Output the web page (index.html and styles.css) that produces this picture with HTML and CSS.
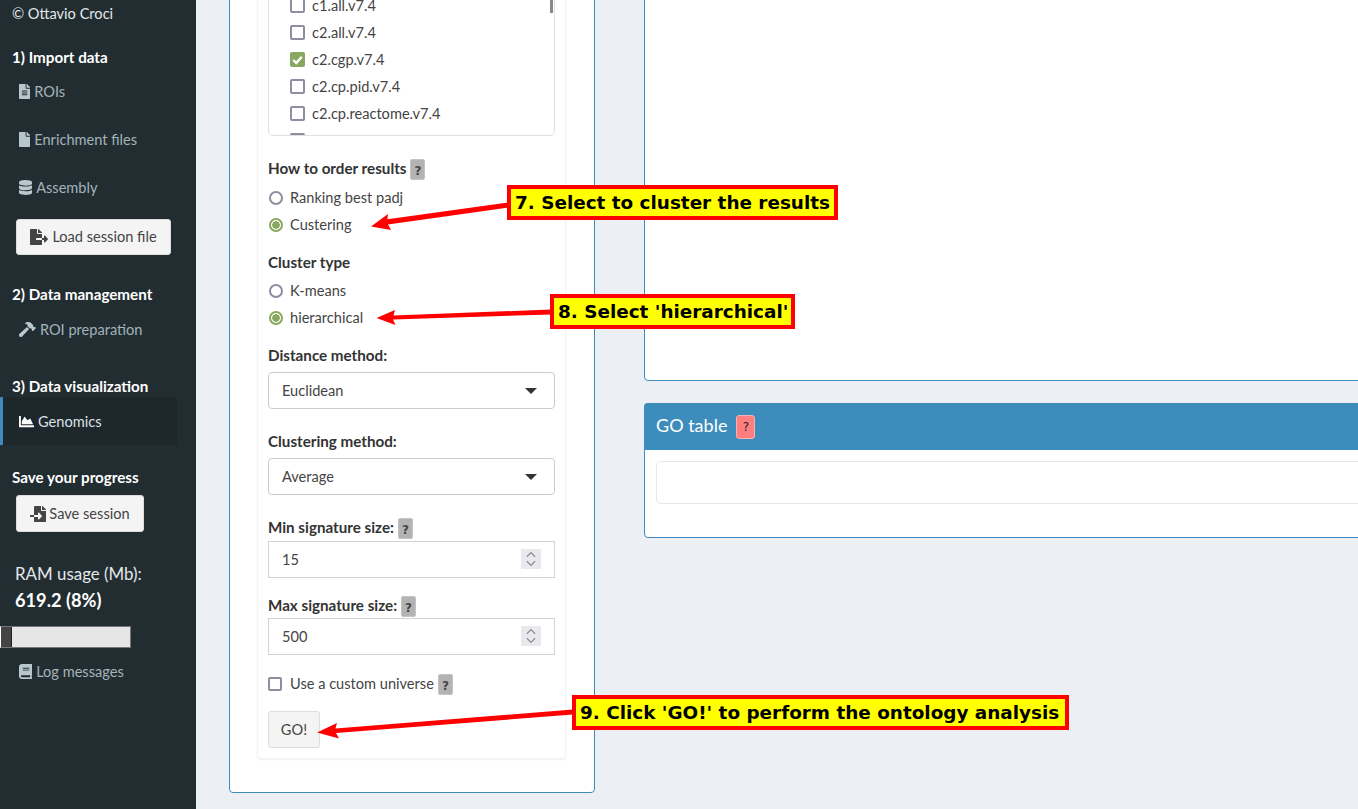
FILE: index.html
```html
<!DOCTYPE html>
<html lang="en">
<head>
<meta charset="UTF-8" />
<title>Ontology analysis</title>
<link rel="stylesheet" href="styles.css">
</head>
<body>
  <aside class="sidebar">
    <div class="side-copy">© Ottavio Croci</div>
    <div class="side-head first">1) Import data</div>
    <a class="nav-item tight"><svg class="ico" viewBox="0 0 384 512"><path d="M224 136V0H24C10.7 0 0 10.7 0 24v464c0 13.3 10.7 24 24 24h336c13.3 0 24-10.7 24-24V160H248c-13.2 0-24-10.8-24-24zm64 236c0 6.600-5.400 12-12 12H108c-6.600 0-12-5.400-12-12v-8c0-6.600 5.400-12 12-12h168c6.600 0 12 5.400 12 12v8zm0-64c0 6.600-5.400 12-12 12H108c-6.600 0-12-5.400-12-12v-8c0-6.600 5.400-12 12-12h168c6.600 0 12 5.400 12 12v8zm0-72v8c0 6.600-5.400 12-12 12H108c-6.600 0-12-5.400-12-12v-8c0-6.600 5.400-12 12-12h168c6.600 0 12 5.400 12 12zm96-114.100v6.100H256V0h6.100c6.400 0 12.500 2.500 17 7l97.900 98c4.500 4.500 7 10.600 7 16.900z"/></svg>ROIs</a>
    <a class="nav-item"><svg class="ico" viewBox="0 0 384 512"><path d="M224 136V0H24C10.7 0 0 10.7 0 24v464c0 13.3 10.7 24 24 24h336c13.3 0 24-10.7 24-24V160H248c-13.2 0-24-10.8-24-24zm160-14.100v6.100H256V0h6.100c6.400 0 12.500 2.500 17 7l97.900 98c4.500 4.500 7 10.600 7 16.900z"/></svg>Enrichment files</a>
    <a class="nav-item"><svg class="ico" viewBox="0 0 448 512"><path d="M448 73.143v45.714C448 159.143 347.667 192 224 192S0 159.143 0 118.857V73.143C0 32.857 100.333 0 224 0s224 32.857 224 73.143zM448 176v102.857C448 319.143 347.667 352 224 352S0 319.143 0 278.857V176c48.125 33.143 136.208 48.572 224 48.572S399.874 209.143 448 176zm0 160v102.857C448 479.143 347.667 512 224 512S0 479.143 0 438.857V336c48.125 33.143 136.208 48.572 224 48.572S399.874 369.143 448 336z"/></svg>Assembly</a>
    <button class="btn load-btn"><svg class="ico" viewBox="0 0 576 512"><path d="M384 121.900c0-6.300-2.500-12.400-7-16.900L279.100 7c-4.500-4.500-10.600-7-17-7H256v128h128zM571 308l-95.700-96.400c-10.100-10.100-27.400-3-27.400 11.300V288h-64v64h64v65.200c0 14.300 17.300 21.400 27.400 11.300L571 332c6.600-6.600 6.600-17.400 0-24zm-379 28v-32c0-8.800 7.200-16 16-16h176V160H248c-13.200 0-24-10.800-24-24V0H24C10.700 0 0 10.700 0 24v464c0 13.300 10.700 24 24 24h336c13.300 0 24-10.700 24-24V352H208c-8.800 0-16-7.200-16-16z"/></svg>Load session file</button>

    <div class="side-head second">2) Data management</div>
    <a class="nav-item"><svg class="ico" viewBox="0 0 576 512"><path d="M571.310 193.940l-22.630-22.630c-6.250-6.250-16.380-6.250-22.630 0l-11.310 11.310-28.900-28.900c5.630-21.310.36-44.900-16.350-61.610l-45.250-45.250c-62.480-62.480-163.790-62.480-226.280 0l90.510 45.250v18.750c0 16.970 6.740 33.250 18.750 45.250l49.140 49.140c16.710 16.710 40.300 21.980 61.610 16.350l28.900 28.900-11.310 11.310c-6.250 6.250-6.250 16.380 0 22.630l22.630 22.630c6.250 6.250 16.380 6.250 22.630 0l90.510-90.510c6.230-6.240 6.230-16.370-.02-22.620zm-286.720-15.200c-3.700-3.700-6.840-7.790-9.850-11.950L19.640 404.960c-25.570 23.880-26.260 64.190-1.530 88.930s65.050 24.050 88.930-1.530l238.130-255.070c-3.960-2.910-7.900-5.870-11.440-9.410l-49.140-49.140z"/></svg>ROI preparation</a>

    <div class="side-head third">3) Data visualization</div>
    <a class="nav-item active"><svg class="ico" viewBox="0 0 512 512"><path d="M500 384c6.600 0 12 5.400 12 12v40c0 6.600-5.400 12-12 12H12c-6.600 0-12-5.400-12-12V76c0-6.600 5.400-12 12-12h40c6.600 0 12 5.400 12 12v308h436zM372.700 159.500L288 216l-85.300-113.700c-5.100-6.800-15.500-6.300-19.900 1L96 248v104h384l-89.900-187.800c-3.200-6.500-11.400-8.700-17.400-4.700z"/></svg>Genomics</a>

    <div class="side-head fourth">Save your progress</div>
    <button class="btn save-btn"><svg class="ico" viewBox="0 0 512 512"><path d="M16 288c-8.800 0-16 7.200-16 16v32c0 8.800 7.200 16 16 16h112v-64zm489-183L407.100 7c-4.500-4.500-10.600-7-17-7H384v128h128v-6.100c0-6.300-2.500-12.400-7-16.900zm-153 31V0H152c-13.300 0-24 10.700-24 24v264h128v-65.200c0-14.300 17.300-21.400 27.400-11.300L379 308c6.600 6.700 6.600 17.400 0 24l-95.700 96.400c-10.100 10.100-27.400 3-27.400-11.300V352H128v136c0 13.300 10.700 24 24 24h336c13.300 0 24-10.700 24-24V160H376c-13.200 0-24-10.800-24-24z"/></svg>Save session</button>

    <div class="ram-label">RAM usage (Mb):</div>
    <div class="ram-value">619.2 (8%)</div>
    <div class="ram-bar"><div class="ram-fill"></div></div>
    <a class="nav-item log-item"><svg class="ico" viewBox="0 0 448 512"><path d="M448 360V24c0-13.300-10.700-24-24-24H96C43 0 0 43 0 96v320c0 53 43 96 96 96h328c13.300 0 24-10.700 24-24v-16c0-7.500-3.500-14.300-8.900-18.700-4.200-15.400-4.200-59.300 0-74.700 5.400-4.300 8.900-11.100 8.900-18.600zM128 134c0-3.300 2.700-6 6-6h212c3.300 0 6 2.700 6 6v20c0 3.300-2.700 6-6 6H134c-3.300 0-6-2.700-6-6v-20zm0 64c0-3.300 2.700-6 6-6h212c3.300 0 6 2.700 6 6v20c0 3.300-2.700 6-6 6H134c-3.300 0-6-2.700-6-6v-20zm253.400 250H96c-17.700 0-32-14.300-32-32 0-17.600 14.400-32 32-32h285.400c-1.900 17.100-1.900 46.900 0 64z"/></svg>Log messages</a>
  </aside>

  <main class="content">
    <section class="box form-box">
      <div class="well">
        <div class="check-list">
          <div class="thumb"></div>
          <div class="opt"><span class="cb"></span>c1.all.v7.4</div>
          <div class="opt"><span class="cb"></span>c2.all.v7.4</div>
          <div class="opt"><span class="cb on"><svg viewBox="0 0 14 14"><path d="M3 7.500l2.800 2.800L11 4.500" fill="none" stroke="#fff" stroke-width="2.200"/></svg></span>c2.cgp.v7.4</div>
          <div class="opt"><span class="cb"></span>c2.cp.pid.v7.4</div>
          <div class="opt"><span class="cb"></span>c2.cp.reactome.v7.4</div>
          <div class="opt"><span class="cb"></span></div>
        </div>

        <div class="lbl m23">How to order results <span class="help">?</span></div>
        <div class="radios">
          <div class="opt radio"><span class="rd"></span>Ranking best padj</div>
          <div class="opt radio"><span class="rd on"></span>Custering</div>
        </div>

        <div class="lbl m15">Cluster type</div>
        <div class="radios r4">
          <div class="opt radio"><span class="rd"></span>K-means</div>
          <div class="opt radio"><span class="rd on"></span>hierarchical</div>
        </div>

        <div class="lbl m15">Distance method:</div>
        <div class="select">Euclidean<span class="caret"></span></div>

        <div class="lbl m23">Clustering method:</div>
        <div class="select">Average<span class="caret"></span></div>

        <div class="lbl m23">Min signature size: <span class="help">?</span></div>
        <div class="num num-min">15<span class="spin"><svg viewBox="0 0 20 22"><path d="M5.500 8.500L10 4l4.500 4.500M5.500 13.500L10 18l4.500-4.500" fill="none" stroke="#8a8a92" stroke-width="1.300"/></svg></span></div>

        <div class="lbl m18">Max signature size: <span class="help">?</span></div>
        <div class="num num-max">500<span class="spin"><svg viewBox="0 0 20 22"><path d="M5.500 8.500L10 4l4.500 4.500M5.500 13.500L10 18l4.500-4.500" fill="none" stroke="#8a8a92" stroke-width="1.300"/></svg></span></div>

        <div class="opt universe"><span class="cb"></span>Use a custom universe <span class="help">?</span></div>
        <button class="btn go-btn">GO!</button>
      </div>
    </section>

    <div class="right-col">
      <section class="box plot-box"></section>
      <section class="box table-box">
        <header class="box-head">GO table <span class="help red">?</span></header>
        <div class="box-body"><div class="empty-table"></div></div>
      </section>
    </div>
  </main>

  <!-- tutorial annotations drawn over the app -->
  <svg class="arrows" viewBox="0 0 1358 809">
    <g fill="#f00">
      <path d="M508 202.500l.8 5L388 224.500l3 5.500-20-3.500 17-12.500-.6 5.300z"/>
      <path d="M551 309.500v5l-158 5 2.500 5.500-19-7 18.500-8 -1.500 5.500z"/>
      <path d="M573 709.500v5l-237 18.500 3 5.500-22-6 20-9.500-1.500 5.500z"/>
    </g>
  </svg>
  <div class="note note-7">7. Select to cluster the results</div>
  <div class="note note-8">8. Select 'hierarchical'</div>
  <div class="note note-9">9. Click 'GO!' to perform the ontology analysis</div>
</body>
</html>
```

FILE: styles.css
```css
* {
  box-sizing: border-box;
}
html, body {
  height: 100%;
}
body {
  margin: 0;
  display: flex;
  overflow: hidden;
  position: relative;
  background: #ecf0f5;
  font-family: "Lato", "Noto Sans", sans-serif;
  font-size: 14.6px;
  color: #444;
}

/* Sidebar */
.sidebar {
  width: 196px;
  flex: none;
  background: #222d32;
  color: #fff;
  padding-top: 3px;
}
.side-copy, .side-head {
  height: 20px;
  line-height: 19px;
  padding-left: 12px;
}
.side-copy {
  line-height: 21px;
  color: #e4e8ea;
}
.side-head {
  font-size: 15.2px;
  font-weight: 700;
}
.side-head.first { margin-top: 25px; }
.side-head.second { margin-top: 30px; }
.side-head.third { margin-top: 24px; }
.side-head.fourth { margin-top: 23px; }

.nav-item {
  display: flex;
  align-items: center;
  height: 48px;
  padding-left: 19px;
  color: #a3b3ba;
}
.nav-item.tight {
  margin-top: -1px;
}
.nav-item.log-item {
  margin-top: -1px;
}
.nav-item .ico {
  height: 15px;
  margin-right: 4px;
  fill: #b8c7ce;
}
.nav-item.active {
  width: 177px;
  padding-left: 16px;
  background: #1e282c;
  border-left: 3px solid #3c8dbc;
  color: #d9e1e5;
}
.nav-item.active .ico {
  fill: #fff;
}

.btn {
  display: flex;
  align-items: center;
  justify-content: center;
  height: 37px;
  padding: 0;
  background: #f4f4f4;
  border: 1px solid #ddd;
  border-radius: 3px;
  font: inherit;
  color: #444;
}
.btn .ico {
  height: 16px;
  fill: #444;
  margin-right: 3px;
}
.load-btn {
  width: 155px;
  height: 36px;
  margin: 8px 0 0 16px;
  padding-bottom: 1px;
}
.load-btn .ico {
  margin-right: 4px;
}
.save-btn {
  width: 128px;
  margin: 7px 0 0 16px;
}

.ram-label, .ram-value {
  height: 24px;
  line-height: 24px;
  padding-left: 15px;
}
.ram-label {
  margin-top: 30px;
  font-size: 16.9px;
  color: #e4e8ea;
}
.ram-value {
  margin-top: 2px;
  font-size: 18.2px;
  font-weight: 700;
}
.ram-bar {
  width: 131px;
  height: 22px;
  margin-top: 14px;
  background: #e6e6e6;
  border: 1px solid #777;
  border-left-color: #fff;
}
.ram-fill {
  width: 11px;
  height: 100%;
  background: #444;
  border-right: 1px solid #222;
}

/* Main area, page is scrolled so tops are cut off */
.content {
  flex: none;
  display: flex;
  align-items: flex-start;
  gap: 49px;
  margin-left: 33px;
  margin-top: -60px;
}
.box {
  background: #fff;
  border: 1px solid #3c8dbc;
  border-radius: 4px;
}
.form-box {
  width: 366px;
  height: 853px;
  padding: 19px 28px 0 27px;
}
.well {
  width: 309px;
  padding: 0 10px 10px;
  background: #fff;
  border: 1px solid #f3f3f3;
  border-radius: 4px;
  box-shadow: 0 1px 2px rgba(0, 0, 0, 0.06);
}
.check-list {
  position: relative;
  height: 156px;
  margin-top: 19px;
  padding: 11px 0 0 21px;
  overflow: hidden;
  border: 1px solid #e0e0e0;
  border-radius: 5px;
}
.thumb {
  position: absolute;
  top: 0;
  right: 1px;
  width: 3px;
  height: 32px;
  background: #888;
}
.opt {
  display: flex;
  align-items: center;
  height: 27px;
  color: #444;
}
.cb {
  display: block;
  flex: none;
  width: 15px;
  height: 15px;
  margin-right: 7px;
  background: #fff;
  border: 2px solid #8f8d9f;
  border-radius: 2px;
}
.cb.on {
  background: #89a85f;
  border-color: #89a85f;
}
.cb svg {
  display: block;
  width: 15px;
  height: 15px;
  margin: -2px;
}
.radio {
  margin-left: 1px;
}
.rd {
  flex: none;
  width: 14px;
  height: 14px;
  margin-right: 7px;
  background: #fff;
  border: 2px solid #8f8d9f;
  border-radius: 50%;
}
.rd.on {
  border-color: #89a85f;
  background: radial-gradient(circle, #89a85f 0 3.5px, #fff 4px);
}
.lbl {
  display: flex;
  align-items: center;
  height: 20px;
  padding-bottom: 2px;
  font-size: 15.2px;
  font-weight: 700;
  color: #333;
}
.radios {
  margin-top: 5px;
}
.radios.r4 {
  margin-top: 4px;
}
.m15 { margin-top: 15px; }
.m18 { margin-top: 18px; }
.m23 { margin-top: 23px; }

.help {
  display: inline-block;
  width: 15px;
  height: 21px;
  line-height: 23px;
  margin: 2px 0 0 4px;
  text-align: center;
  background: #b3b3b3;
  border: 1px solid #c4c4c4;
  border-radius: 2px;
  font-family: "DejaVu Sans", sans-serif;
  font-size: 12px;
  font-weight: 700;
  color: #444;
}
.help.red {
  width: 19px;
  height: 24px;
  line-height: 22px;
  margin: 3px 0 0 9px;
  background: #ff7f7f;
  border-color: #f3b4b4;
  border-radius: 3px;
  font-weight: 400;
  color: #222;
}
.select {
  position: relative;
  height: 37px;
  line-height: 35px;
  margin-top: 6px;
  padding-left: 13px;
  border: 1px solid #ccc;
  border-radius: 4px;
  color: #444;
}
.caret {
  position: absolute;
  top: 15px;
  right: 17px;
  border: 6px solid transparent;
  border-top-color: #333;
  border-bottom: 0;
}
.num {
  position: relative;
  height: 37px;
  line-height: 35px;
  padding-left: 13px;
  border: 1px solid #d2d2dc;
  color: #444;
}
.num-min { margin-top: 3px; }
.num-max { margin-top: 2px; }
.spin {
  position: absolute;
  top: 7px;
  right: 13px;
  width: 20px;
  height: 20px;
  background: #e9e9ed;
}
.spin svg {
  display: block;
  width: 20px;
  height: 20px;
}
.universe {
  margin-top: 15px;
}
.universe .cb {
  width: 14px;
  height: 14px;
  margin-right: 8px;
}
.go-btn {
  width: 52px;
  margin-top: 14px;
}

.right-col {
  width: 800px;
}
.plot-box {
  height: 441px;
}
.table-box {
  height: 135px;
  margin-top: 22px;
}
.box-head {
  display: flex;
  align-items: center;
  height: 47px;
  margin: -1px -1px 0;
  padding: 0 0 3px 12px;
  background: #3c8dbc;
  border-radius: 4px 4px 0 0;
  font-size: 18px;
  color: #fff;
}
.box-body {
  padding: 11px;
}
.empty-table {
  height: 43px;
  border: 1px solid #e6e6e6;
  border-radius: 5px;
}

/* Annotations */
.arrows {
  position: absolute;
  top: 0;
  left: 0;
  width: 1358px;
  height: 809px;
}
.note {
  position: absolute;
  height: 35px;
  line-height: 28px;
  padding: 0 4px;
  background: #ff0;
  border: 4px solid #f00;
  font-family: "DejaVu Sans", sans-serif;
  font-size: 18.4px;
  font-weight: 700;
  color: #000;
  white-space: nowrap;
}
.note-7 { left: 507px; top: 185px; width: 331px; }
.note-8 { left: 550px; top: 294px; width: 245px; }
.note-9 { left: 572px; top: 695px; width: 497px; }
```
